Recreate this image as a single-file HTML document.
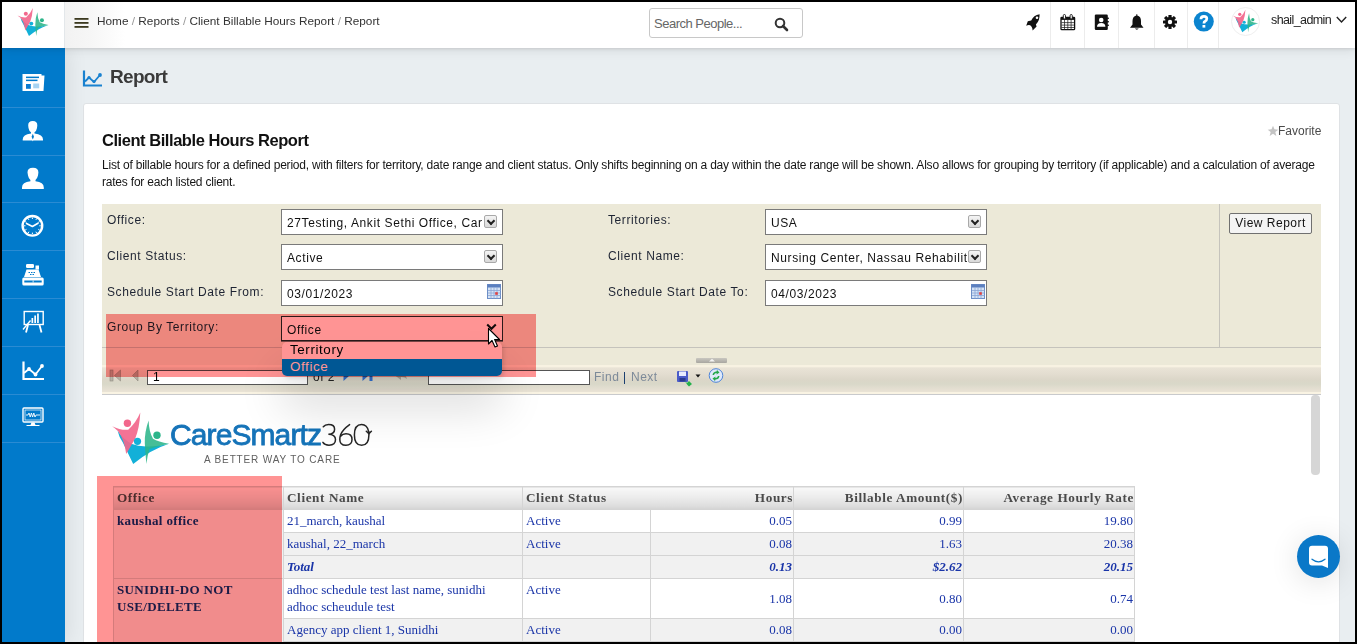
<!DOCTYPE html>
<html><head><meta charset="utf-8">
<style>
*{box-sizing:border-box;margin:0;padding:0}
html,body{width:1357px;height:644px;overflow:hidden;background:#e9eef1}
body{font-family:"Liberation Sans",sans-serif;position:relative}
.a{position:absolute}
#bord{left:0;top:0;width:1357px;height:644px;border:2px solid #000;z-index:100}
/* header */
#hdr{left:2px;top:2px;width:1353px;height:46px;background:#fff;box-shadow:0 1px 3px rgba(0,0,0,.1),0 3px 10px rgba(0,0,0,.08);z-index:5}
#hdrmain{left:64px;top:2px;width:1291px;height:46px;border-left:1px solid #e3e7ea;background:linear-gradient(90deg,#f2f2f2 0,#f6f6f6 25px,#fff 60px);z-index:6}
#side{left:2px;top:48px;width:63px;height:594px;background:#017acb;z-index:4;box-shadow:2px 0 22px rgba(0,0,0,.09)}
.dv{left:0;width:63px;height:1px;background:#2a8bd3}
.crumb{left:97px;top:14px;font-size:11.8px;color:#333;white-space:nowrap;z-index:7}
.crumb span{color:#999}
#search{left:649px;top:8px;width:154px;height:30px;border:1px solid #c8c8c8;border-radius:3px;background:#fff;z-index:7}
#search .ph{position:absolute;left:4px;top:7px;font-size:13px;color:#666;letter-spacing:-.5px}
.hdv{top:2px;width:1px;height:46px;background:#ececec;z-index:7}
.ico{z-index:8}
#uname{left:1271px;top:13px;font-size:12.5px;color:#222;z-index:8;letter-spacing:-0.6px}
/* page */
#ptitle{left:110px;top:66px;font-size:19px;font-weight:bold;color:#3a3a3a;letter-spacing:-0.7px}
#card{left:83px;top:103px;width:1257px;height:560px;background:#fff;border:1px solid #dfe2e5;border-radius:3px}
#ctitle{left:102px;top:131px;font-size:16.5px;font-weight:bold;color:#111;letter-spacing:-0.45px;white-space:nowrap}
#cdesc{left:102px;top:157px;font-size:12px;line-height:17px;color:#151515;white-space:nowrap;letter-spacing:-0.21px}
#fav{left:1267px;top:124px;font-size:12px;color:#4a4a4a;letter-spacing:0px}

#parm{left:102px;top:204px;width:1219px;height:161px;background:#ece9d8}
.pl{font-size:12px;color:#1e2433;white-space:nowrap;letter-spacing:0.6px}
.inp{height:26px;border:1px solid #7a7a7a;background:#fff;font-size:12px;color:#111;white-space:nowrap;overflow:hidden;padding:0 0 0 5px;line-height:27px;letter-spacing:0.6px}
.ddb{position:absolute;width:13px;height:13px;border:1px solid #a9a9a9;border-radius:2px;background:linear-gradient(#f4f4f4,#d9d9d9)}
.ddb:after{content:"";position:absolute;left:3.2px;top:2.2px;width:4px;height:4px;border-right:2px solid #222;border-bottom:2px solid #222;transform:rotate(45deg)}
#tbar{left:102px;top:365px;width:1219px;height:30px;background:linear-gradient(#f8f2e2 0,#f8f2e2 1.5px,#e9e3d6 3px,#e3ddd0 9px,#dbd6c8 15px,#d9d8c9 19px,#e6e0d3 25px,#eae4d6 27px,#f9f3e3 27.5px,#f9f3e3 29px,#c9cacc 29px)}
.tt{font-size:12px;white-space:nowrap}

#rep{left:102px;top:395px;width:1219px;height:250px;background:#fff;overflow:hidden}
table.rt{position:absolute;left:113px;top:486px;border-collapse:collapse;font-family:"Liberation Serif",serif;font-size:13px;color:#1a35a8;table-layout:fixed}
table.rt td,table.rt th{border:1px solid #d4d4d4;vertical-align:top;padding:0 2px 0 3px;overflow:hidden;white-space:nowrap}
table.rt th{height:21px;background:linear-gradient(#f8f8f8,#ececec 45%,#dddddd 85%,#d3d3d3);color:#4a4a4a;font-weight:bold;text-align:left;line-height:17px;font-size:13.2px;letter-spacing:0.6px;padding-top:2px;vertical-align:top}
table.rt td{line-height:17px;padding-top:2px}
table.rt .r{text-align:right;padding-right:1px}
table.rt th.r{padding-right:0}
table.rt .g{background:#f1f1f1}
table.rt .m{vertical-align:middle;padding-top:0}
table.rt th.nb{border-left-style:hidden}
</style></head>
<body>
<div id="bord" class="a"></div>
<div id="hdr" class="a"></div>
<div id="hdrmain" class="a"></div>
<!-- header logo -->
<svg class="a ico" style="left:0;top:0" width="60" height="48" viewBox="0 0 60 48"><g transform="translate(-43.48 -216.45) scale(.544)"><path d="M117.6 430.7 Q119 437 122.7 442.3 L133.2 464 Q150 450 169 443.8 Q155 447 146 446.5 Q138 446 132 444 Q124 440 117.6 430.7Z" fill="#12b0d8"/>
  <path d="M112.1 426.2 Q121 430.5 128.2 429.7 Q136 423 140.3 412.6 Q139.5 428 135.3 438.3 L126.2 453.9 Q124.5 440 118.1 431.2 Q115 428 112.1 426.2Z" fill="#f2678c" opacity=".92"/>
  <path d="M148.6 420.6 Q144.5 432 144.8 443.3 Q145.5 455 146.4 464 Q147.5 455 149.5 449 Q158 446 169 443.8 Q158 442 153 438.8 Q149 432 148.6 420.6Z" fill="#2cb58a" opacity=".88"/>
  <circle cx="127.4" cy="423.2" r="3.7" fill="#f2678c"/>
  <circle cx="137.5" cy="441.3" r="3.6" fill="#12b0d8"/>
  <circle cx="157" cy="435.3" r="3.7" fill="#2cb58a"/></g></svg>
<!-- hamburger -->
<svg class="a ico" style="left:74px;top:17px" width="15" height="12" viewBox="0 0 15 12">
  <rect x="0.5" y="1" width="14" height="1.8" fill="#3b391f"/>
  <rect x="0.5" y="5" width="14" height="1.8" fill="#3b391f"/>
  <rect x="0.5" y="9" width="14" height="1.8" fill="#3b391f"/>
</svg>
<div class="a crumb">Home <span>/</span> Reports <span>/</span> Client Billable Hours Report <span>/</span> Report</div>
<div id="search" class="a"><div class="ph">Search People...</div>
  <svg class="a" style="left:124px;top:8px" width="15" height="15" viewBox="0 0 15 15"><circle cx="6" cy="6" r="4.3" fill="none" stroke="#333" stroke-width="2"/><path d="M9 9 L13 13" stroke="#333" stroke-width="2.6" stroke-linecap="round"/></svg>
</div>

<!-- header dividers -->
<div class="a hdv" style="left:1050px"></div>
<div class="a hdv" style="left:1084px"></div>
<div class="a hdv" style="left:1118px"></div>
<div class="a hdv" style="left:1154px"></div>
<div class="a hdv" style="left:1187px"></div>
<div class="a hdv" style="left:1218px"></div>
<!-- rocket -->
<svg class="a ico" style="left:1025px;top:14px" width="16" height="17" viewBox="0 0 16 17">
  <path d="M14.6 0.3 Q8.5 1.2 6.2 6.6 L2.8 7.3 L1.2 11.8 Q3.2 10.6 5.2 11.2 L6.6 12.8 Q7.6 14.6 7.6 16.6 L11.6 12.6 L10.9 10.4 Q14.8 7 14.6 0.3Z" fill="#111"/>
  <circle cx="12" cy="3.7" r="1.3" fill="#fff"/>
</svg>
<!-- calendar -->
<svg class="a ico" style="left:1060px;top:14px" width="16" height="17" viewBox="0 0 16 17">
  <rect x="1" y="3.3" width="13.6" height="12.4" rx=".8" fill="#fff" stroke="#111" stroke-width="1.3"/>
  <rect x="1" y="3.3" width="13.6" height="2.6" fill="#111"/>
  <path d="M1.5 8.6H14.1M1.5 11.1H14.1M1.5 13.5H14.1M4.5 5.8V15.5M7.8 5.8V15.5M11.1 5.8V15.5" stroke="#222" stroke-width=".75"/>
  <rect x="3.3" y="0.5" width="2.2" height="4.5" rx="1.1" fill="#fff" stroke="#111" stroke-width="0.9"/>
  <rect x="10.1" y="0.5" width="2.2" height="4.5" rx="1.1" fill="#fff" stroke="#111" stroke-width="0.9"/>
</svg>
<!-- contacts -->
<svg class="a ico" style="left:1094px;top:14px" width="16" height="17" viewBox="0 0 16 17">
  <rect x="0.8" y="0.5" width="13" height="15.5" rx="1.2" fill="#111"/>
  <rect x="13" y="3.5" width="2" height="1.6" rx=".8" fill="#111"/><rect x="13" y="7" width="2" height="1.6" rx=".8" fill="#111"/><rect x="13" y="10.5" width="2" height="1.6" rx=".8" fill="#111"/>
  <circle cx="7.2" cy="6" r="2.3" fill="#fff"/>
  <path d="M3 12.8 Q3 9 7.2 9 Q11.4 9 11.4 12.8Z" fill="#fff"/>
</svg>
<!-- bell -->
<svg class="a ico" style="left:1129px;top:14px" width="16" height="17" viewBox="0 0 16 17">
  <path d="M7.3 0.3 L8.3 0.3 L8.3 1.5 Q12 2.4 12 7 L12 10.5 L14.5 13.8 L1 13.8 L3.5 10.5 L3.5 7 Q3.6 2.4 7.3 1.5Z" fill="#111"/>
  <path d="M5.8 14.5 Q7.8 16.8 9.8 14.5Z" fill="#111"/>
</svg>
<!-- gear -->
<svg class="a ico" style="left:1163px;top:15px" width="15" height="15" viewBox="0 0 15 15">
  <g fill="#111" transform="translate(7 7)">
    <circle r="4.9"/>
    <rect x="-1.6" y="-7" width="3.2" height="14" rx=".5"/>
    <rect x="-1.6" y="-7" width="3.2" height="14" rx=".5" transform="rotate(45)"/>
    <rect x="-1.6" y="-7" width="3.2" height="14" rx=".5" transform="rotate(90)"/>
    <rect x="-1.6" y="-7" width="3.2" height="14" rx=".5" transform="rotate(135)"/>
  </g>
  <circle cx="7" cy="7" r="2.2" fill="#fff"/>
</svg>
<!-- help -->
<svg class="a ico" style="left:1193px;top:11px" width="22" height="22" viewBox="0 0 22 22">
  <circle cx="10.8" cy="10.6" r="10" fill="#0b84cf"/>
  <path d="M7.9 8.3 Q7.9 5.4 10.9 5.4 Q13.8 5.4 13.8 7.8 Q13.8 9.3 12.1 10.2 Q10.9 10.8 10.9 12.5" fill="none" stroke="#fff" stroke-width="2.7"/>
  <rect x="9.5" y="14" width="2.8" height="2.6" fill="#fff"/>
</svg>
<!-- avatar -->
<div class="a ico" style="left:1231px;top:7px;width:29px;height:29px;border-radius:50%;border:1px solid #eee;background:#fff"></div>
<svg class="a ico" style="left:1220px;top:0px" width="40" height="46" viewBox="0 0 40 46"><g transform="translate(-36.3 -171.9) scale(.44)"><path d="M117.6 430.7 Q119 437 122.7 442.3 L133.2 464 Q150 450 169 443.8 Q155 447 146 446.5 Q138 446 132 444 Q124 440 117.6 430.7Z" fill="#12b0d8"/>
  <path d="M112.1 426.2 Q121 430.5 128.2 429.7 Q136 423 140.3 412.6 Q139.5 428 135.3 438.3 L126.2 453.9 Q124.5 440 118.1 431.2 Q115 428 112.1 426.2Z" fill="#f2678c" opacity=".92"/>
  <path d="M148.6 420.6 Q144.5 432 144.8 443.3 Q145.5 455 146.4 464 Q147.5 455 149.5 449 Q158 446 169 443.8 Q158 442 153 438.8 Q149 432 148.6 420.6Z" fill="#2cb58a" opacity=".88"/>
  <circle cx="127.4" cy="423.2" r="3.7" fill="#f2678c"/>
  <circle cx="137.5" cy="441.3" r="3.6" fill="#12b0d8"/>
  <circle cx="157" cy="435.3" r="3.7" fill="#2cb58a"/></g></svg>
<div id="uname" class="a">shail_admin</div>
<svg class="a ico" style="left:1336px;top:16px" width="11" height="8" viewBox="0 0 11 8"><path d="M0.8 1 L5.5 6 L10.2 1" fill="none" stroke="#222" stroke-width="1.4"/></svg>
<div id="side" class="a">
  <div class="a dv" style="top:59px"></div>
  <div class="a dv" style="top:107px"></div>
  <div class="a dv" style="top:154px"></div>
  <div class="a dv" style="top:202px"></div>
  <div class="a dv" style="top:250px"></div>
  <div class="a dv" style="top:298px"></div>
  <div class="a dv" style="top:346px"></div>
  <div class="a dv" style="top:394px"></div>
</div>
<!-- sidebar icons (page coords) -->
<svg class="a" style="left:0;top:48px;z-index:6" width="65" height="400" viewBox="0 48 65 400">
  <!-- newspaper -->
  <path d="M22.5 74 H41.5 V75.5 H44.5 L43.5 91 H22.5Z" fill="#fff"/>
  <rect x="26" y="76.6" width="13" height="1.5" fill="#017acb"/>
  <rect x="26" y="79.6" width="11.5" height="1.5" fill="#017acb"/>
  <rect x="26" y="84" width="4.8" height="4.8" fill="#0a7ad0"/>
  <rect x="33.2" y="83.5" width="6" height="4.8" fill="#a6d3f2"/>
  <!-- person with tie -->
  <path d="M28.2 125.5 Q28 121 32.8 121 Q37.5 121 37.3 125.5 L37 128 Q36.5 131 34.5 132.3 L34.5 133.5 Q43 134.5 43 139.5 L43 140.5 L22.7 140.5 L22.7 139.5 Q22.7 134.5 31 133.5 L31 132.3 Q29 131 28.5 128Z" fill="#fff"/>
  <path d="M32.8 133.8 L34 136.8 L32.8 139.6 L31.6 136.8Z" fill="#017acb"/>
  <path d="M32.2 139.8 H33.4 L32.8 141.6Z" fill="#fff"/>
  <!-- person -->
  <path d="M27.5 172.5 Q27.3 167.7 33 167.7 Q38.5 167.7 38.4 172.5 L38 175.5 Q37.3 178.5 35.5 180 L35.5 181.3 Q43.8 182.3 43.8 187.5 L43.8 189 L22 189 L22 187.5 Q22 182.3 30.4 181.3 L30.4 180 Q28.6 178.5 28 175.5Z" fill="#fff"/>
  <!-- clock -->
  <circle cx="32.4" cy="225.8" r="9.8" fill="none" stroke="#fff" stroke-width="2.4"/>
  <path d="M32.4 226.5 L26.5 223.5 M32.4 226.5 L38 223.2" stroke="#fff" stroke-width="1.6" stroke-linecap="round"/>
  <g stroke="#fff" stroke-width="1"><path d="M32.4 217.5V219M32.4 232.6V234.1M24 225.8H25.5M39.3 225.8H40.8M28.2 218.6L28.9 219.9M36.6 218.6L35.9 219.9M28.2 233L28.9 231.7M36.6 233L35.9 231.7M25.2 221.6L26.5 222.3M39.6 221.6L38.3 222.3M25.2 230L26.5 229.3M39.6 230L38.3 229.3"/></g>
  <!-- register -->
  <rect x="26" y="264" width="8" height="4" rx="1.2" fill="#fff"/>
  <rect x="35.5" y="265.5" width="3.5" height="4" fill="#fff"/>
  <path d="M26.5 269.5 H38.5 L41 277 H24Z" fill="#fff"/>
  <g fill="#017acb"><rect x="28.5" y="272" width="1.5" height="1"/><rect x="31" y="272" width="1.5" height="1"/><rect x="33.5" y="272" width="1.5" height="1"/><rect x="30" y="274" width="1.5" height="1"/><rect x="32.5" y="274" width="1.5" height="1"/></g>
  <rect x="22.3" y="277.5" width="21.4" height="8" rx="1.5" fill="#fff"/>
  <rect x="24.3" y="280.5" width="17.4" height="2" fill="#017acb"/>
  <rect x="32.7" y="280.5" width="0.8" height="2" fill="#fff"/>
  <!-- presentation -->
  <rect x="24.2" y="311.5" width="19" height="13" fill="none" stroke="#fff" stroke-width="1.4"/>
  <rect x="31.5" y="318" width="1.7" height="5" fill="#fff"/><rect x="34.3" y="315.5" width="1.7" height="7.5" fill="#fff"/><rect x="37.1" y="313.5" width="1.7" height="9.5" fill="#fff"/>
  <path d="M23 329.5 L30.5 320.5" stroke="#fff" stroke-width="1.3"/>
  <path d="M28 325 L26 332.5 M39.5 325 L41.5 332.5" stroke="#fff" stroke-width="1.8"/>
  <!-- chart -->
  <path d="M23.5 361.5 V379 H44" fill="none" stroke="#fff" stroke-width="2.2"/>
  <path d="M24 373 L29 369 L35.5 374.5 L42 366" fill="none" stroke="#fff" stroke-width="1.8"/>
  <circle cx="29" cy="369" r="1.9" fill="#fff"/><circle cx="35.5" cy="374.5" r="1.9" fill="#fff"/><circle cx="42" cy="366" r="1.9" fill="#fff"/>
  <!-- monitor -->
  <rect x="23" y="408" width="20" height="14" rx="1" fill="none" stroke="#fff" stroke-width="1.4"/>
  <rect x="25" y="410" width="16" height="10" fill="none" stroke="#fff" stroke-width=".7"/>
  <path d="M26 415 H28 L29 413 L30.2 417 L31.4 413 L32.6 417 L33.8 413 L35 417 L36 415 H40" fill="none" stroke="#fff" stroke-width=".9"/>
  <path d="M31.5 422.5 L30.5 425 H26.5 V426 H39.5 V425 H35.5 L34.5 422.5Z" fill="#fff"/>
</svg>
<!-- page title -->
<svg class="a" style="left:82px;top:69px" width="22" height="19" viewBox="0 0 22 19">
  <path d="M2 1.5 V16.5 H20" fill="none" stroke="#1a82d0" stroke-width="2.2"/>
  <path d="M3 12.5 L7 8.5 L12 13 L18 6" fill="none" stroke="#1a82d0" stroke-width="1.8"/>
  <circle cx="7" cy="8.5" r="1.6" fill="#1a82d0"/><circle cx="12" cy="12.5" r="1.6" fill="#1a82d0"/><circle cx="18" cy="6" r="1.9" fill="#1a82d0"/>
</svg>
<div id="ptitle" class="a">Report</div>
<div id="card" class="a"></div>
<div id="ctitle" class="a">Client Billable Hours Report</div>
<div id="cdesc" class="a">List of billable hours for a defined period, with filters for territory, date range and client status. Only shifts beginning on a day within the date range will be shown. Also allows for grouping by territory (if applicable) and a calculation of average<br>rates for each listed client.</div>

<div id="parm" class="a"></div>
<div class="a" style="left:102px;top:347px;width:1219px;height:1px;background:#c5c3bc"></div>
<div class="a" style="left:1219px;top:204px;width:1px;height:143px;background:#c5c3bc"></div>
<div class="a pl" style="left:107px;top:213px">Office:</div>
<div class="a pl" style="left:107px;top:249px">Client Status:</div>
<div class="a pl" style="left:107px;top:285px">Schedule Start Date From:</div>
<div class="a pl" style="left:107px;top:320px">Group By Territory:</div>
<div class="a pl" style="left:608px;top:213px">Territories:</div>
<div class="a pl" style="left:608px;top:249px">Client Name:</div>
<div class="a pl" style="left:608px;top:285px">Schedule Start Date To:</div>
<div class="a inp" style="left:281px;top:209px;width:222px">27Testing, Ankit Sethi Office, Car<span class="ddb" style="left:202px;top:5px"></span></div>
<div class="a inp" style="left:281px;top:244px;width:222px">Active<span class="ddb" style="left:202px;top:5px"></span></div>
<div class="a inp" style="left:281px;top:280px;width:222px">03/01/2023</div>
<div class="a inp" style="left:281px;top:316px;width:222px">Office</div>
<div class="a inp" style="left:765px;top:209px;width:222px">USA<span class="ddb" style="left:202px;top:5px"></span></div>
<div class="a inp" style="left:765px;top:244px;width:222px">Nursing Center, Nassau Rehabilita<span class="ddb" style="left:202px;top:5px"></span></div>
<div class="a inp" style="left:765px;top:280px;width:222px">04/03/2023</div>
<div class="a" style="left:1229px;top:213px;width:83px;height:21px;border:1px solid #707070;border-radius:2px;background:#f4f4f4;font-size:12px;color:#111;text-align:center;line-height:19px;letter-spacing:0.5px">View Report</div>
<svg class="a" style="left:487px;top:284px" width="15" height="15" viewBox="0 0 15 15"><rect x="0.5" y="0.5" width="13" height="14" fill="#d5e3f5" stroke="#6d8fc7"/><rect x="0.5" y="0.5" width="13" height="3" fill="#5b7fbf"/><path d="M1 6.5H13.5M1 9H13.5M1 11.5H13.5M4 3.5V14.5M7 3.5V14.5M10 3.5V14.5" stroke="#8aa6d6" stroke-width=".8"/><rect x="8.2" y="8.2" width="2.6" height="2.6" fill="#e04040"/></svg><svg class="a" style="left:971px;top:284px" width="15" height="15" viewBox="0 0 15 15"><rect x="0.5" y="0.5" width="13" height="14" fill="#d5e3f5" stroke="#6d8fc7"/><rect x="0.5" y="0.5" width="13" height="3" fill="#5b7fbf"/><path d="M1 6.5H13.5M1 9H13.5M1 11.5H13.5M4 3.5V14.5M7 3.5V14.5M10 3.5V14.5" stroke="#8aa6d6" stroke-width=".8"/><rect x="8.2" y="8.2" width="2.6" height="2.6" fill="#e04040"/></svg><div id="tbar" class="a"></div>

<!-- toolbar contents -->
<svg class="a" style="left:108px;top:369px" width="32" height="13" viewBox="0 0 32 13">
  <rect x="2" y="1" width="3" height="11" fill="#b8b4a8" stroke="#8e8a80" stroke-width=".6"/>
  <path d="M12.5 1 L6.5 6.5 L12.5 12Z" fill="#b4b0a4" stroke="#8e8a80" stroke-width=".6"/>
  <path d="M30 1 L24.5 6.5 L30 12Z" fill="#b4b0a4" stroke="#8e8a80" stroke-width=".6"/>
</svg>
<div class="a" style="left:147px;top:370px;width:161px;height:15px;border:1px solid #555;background:#fff;font-size:12px;line-height:13px;padding-left:5px;color:#000">1</div>
<div class="a tt" style="left:313px;top:370px;color:#222;letter-spacing:.5px">of 2</div>
<svg class="a" style="left:340px;top:369px" width="36" height="13" viewBox="0 0 36 13">
  <path d="M3.5 1 L9.5 6.5 L3.5 12Z" fill="#2e6fd0"/>
  <path d="M22.5 1 L28.5 6.5 L22.5 12Z" fill="#2e6fd0"/><rect x="29.5" y="1" width="3" height="11" fill="#2e6fd0"/>
</svg>
<svg class="a" style="left:393px;top:369px" width="16" height="13" viewBox="0 0 16 13"><path d="M2 6.5 L8 2 V5 Q13 5 14 10 Q12 8 8 8 V11Z" fill="#aaa69a"/></svg>
<div class="a" style="left:428px;top:370px;width:162px;height:15px;border:1px solid #555;background:#fff"></div>
<div class="a tt" style="left:594px;top:370px;color:#7d8a99;letter-spacing:.5px">Find</div>
<div class="a" style="left:624px;top:372px;width:1px;height:12px;background:#1b3f70"></div>
<div class="a tt" style="left:631px;top:370px;color:#7d8a99;letter-spacing:.5px">Next</div>
<svg class="a" style="left:676px;top:370px" width="18" height="17" viewBox="0 0 18 17">
  <rect x="1" y="1" width="11" height="11" rx="1" fill="#4a5bc8"/>
  <rect x="3" y="1.5" width="7" height="4.5" fill="#e8ecff"/>
  <rect x="3.5" y="8" width="6" height="3.5" fill="#2a3a90"/>
  <path d="M8 10 L11 13 L13 11 L16 14 L13 16.5 L11.5 15 Z" fill="#22b04a"/>
</svg>
<svg class="a" style="left:694px;top:373px" width="8" height="6" viewBox="0 0 8 6"><path d="M1.5 1.5 H6.5 L4 4.5Z" fill="#111"/></svg>
<svg class="a" style="left:708px;top:368px" width="16" height="16" viewBox="0 0 16 16">
  <circle cx="8" cy="7.5" r="6.8" fill="#dfe9fb" stroke="#4d84d8" stroke-width="1"/>
  <path d="M4.5 7 Q5 3.5 8.5 3.5 L9 2 L11.5 4.5 L8.5 6.5 L8.7 5 Q6.5 5 6 7Z" fill="#23a84a"/>
  <path d="M11.5 8 Q11 11.5 7.5 11.5 L7 13 L4.5 10.5 L7.5 8.5 L7.3 10 Q9.5 10 10 8Z" fill="#23a84a"/>
</svg>
<div class="a" style="left:696px;top:358px;width:31px;height:5px;background:linear-gradient(#c9c7c0,#a8a6a0);border-radius:1px"></div>
<svg class="a" style="left:708px;top:358px" width="8" height="4" viewBox="0 0 8 4"><path d="M1 3.5 L4 0.8 L7 3.5Z" fill="#f4f4f4"/></svg>


<div id="rep" class="a"></div>
<!-- report logo -->
<svg class="a" style="left:108px;top:408px" width="70" height="60" viewBox="108 408 70 60">
  <g style="mix-blend-mode:multiply">
  <path d="M117.6 430.7 Q119 437 122.7 442.3 L133.2 464 Q150 450 169 443.8 Q155 447 146 446.5 Q138 446 132 444 Q124 440 117.6 430.7Z" fill="#12b0d8"/>
  </g>
  <path d="M112.1 426.2 Q121 430.5 128.2 429.7 Q136 423 140.3 412.6 Q139.5 428 135.3 438.3 L126.2 453.9 Q124.5 440 118.1 431.2 Q115 428 112.1 426.2Z" fill="#f2678c" opacity=".92"/>
  <path d="M148.6 420.6 Q144.5 432 144.8 443.3 Q145.5 455 146.4 464 Q147.5 455 149.5 449 Q158 446 169 443.8 Q158 442 153 438.8 Q149 432 148.6 420.6Z" fill="#2cb58a" opacity=".88"/>
  <circle cx="127.4" cy="423.2" r="3.7" fill="#f2678c"/>
  <circle cx="137.5" cy="441.3" r="3.6" fill="#12b0d8"/>
  <circle cx="157" cy="435.3" r="3.7" fill="#2cb58a"/>
</svg>
<div class="a" style="left:170px;top:418px;font-size:30px;color:#1573b8;letter-spacing:-0.9px;white-space:nowrap;-webkit-text-stroke:0.8px #1573b8">CareSmartz</div>
<svg class="a" style="left:318px;top:420px" width="56" height="30" viewBox="318 420 56 30">
  <g fill="none" stroke="#262626" stroke-width="1.5" stroke-linecap="round">
    <path d="M323.3 426.8 Q325 424.5 328.6 424.5 Q334.6 424.5 334.6 429.2 Q334.6 434 328.4 434.2 Q335.5 434.4 335.5 439.6 Q335.5 445.2 329 445.2 Q324.6 445.2 322.9 442.4"/>
    <path d="M349.6 424.6 Q342.6 429.6 340.6 434.8 Q339.8 437 339.8 439.4 Q339.8 445.2 345.9 445.2 Q352 445.2 352 439.5 Q352 433.8 346 433.8 Q342.5 433.8 340.6 436.2"/>
    <path d="M368.6 431.5 Q367.2 424.5 361.6 424.5 Q354.4 424.5 354.4 434.9 Q354.4 445.2 361.6 445.2 Q368.9 445.2 368.9 434.9 L368.9 431.6"/>
    <path d="M366.3 431.2 L368.9 433.6 L371.4 431.2"/>
  </g>
</svg>
<div class="a" style="left:204px;top:453.5px;font-size:10px;color:#606060;letter-spacing:0.85px;white-space:nowrap">A BETTER WAY TO CARE</div>
<table class="rt">
<colgroup><col style="width:170px"><col style="width:239px"><col style="width:128px"><col style="width:143px"><col style="width:170px"><col style="width:171px"></colgroup>
<tr style="height:23px"><th>Office</th><th>Client Name</th><th>Client Status</th><th class="r nb">Hours</th><th class="r">Billable Amount($)</th><th class="r">Average Hourly Rate</th></tr>
<tr style="height:23px"><td rowspan="3" class="g" style="font-weight:bold;color:#1c2e78;letter-spacing:.35px">kaushal office</td><td>21_march, kaushal</td><td>Active</td><td class="r">0.05</td><td class="r">0.99</td><td class="r">19.80</td></tr>
<tr style="height:23px"><td class="g">kaushal, 22_march</td><td class="g">Active</td><td class="r g">0.08</td><td class="r g">1.63</td><td class="r g">20.38</td></tr>
<tr style="height:23px"><td class="g" style="font-weight:bold;font-style:italic">Total</td><td class="g"></td><td class="r g" style="font-weight:bold;font-style:italic">0.13</td><td class="r g" style="font-weight:bold;font-style:italic">$2.62</td><td class="r g" style="font-weight:bold;font-style:italic">20.15</td></tr>
<tr style="height:40px"><td rowspan="3" class="g" style="font-weight:bold;color:#1c2e78;white-space:normal;letter-spacing:.35px">SUNIDHI-DO NOT<br>USE/DELETE</td><td style="white-space:normal">adhoc schedule test last name, sunidhi<br>adhoc scheudule test</td><td>Active</td><td class="r m">1.08</td><td class="r m">0.80</td><td class="r m">0.74</td></tr>
<tr style="height:23px"><td class="g">Agency app client 1, Sunidhi</td><td class="g">Active</td><td class="r g">0.08</td><td class="r g">0.00</td><td class="r g">0.00</td></tr>
<tr><td class="g">x</td><td class="g">x</td><td class="r g">x</td><td class="r g">x</td><td class="r g">x</td></tr>
</table>
<div class="a" style="left:97px;top:476px;width:185px;height:170px;background:#ff9494;mix-blend-mode:multiply;z-index:25"></div>
<div class="a" style="left:1311px;top:395px;width:9px;height:80px;border-radius:4px;background:#d6d6d6"></div>

<div class="a" style="left:1297px;top:535px;width:43px;height:43px;border-radius:50%;background:#0a78c8;box-shadow:0 4px 30px rgba(0,0,0,.12);z-index:40"></div>
<svg class="a" style="left:1297px;top:535px;z-index:41" width="43" height="43" viewBox="1297 535 43 43">
  <path d="M1312 545.8 H1325 Q1328 545.8 1328 548.8 V568 L1322 565.5 H1312 Q1309 565.5 1309 562.5 V548.8 Q1309 545.8 1312 545.8Z" fill="#fff"/>
  <path d="M1312 559.2 Q1318.5 564.5 1325 559.2" fill="none" stroke="#0a78c8" stroke-width="1.3" stroke-linecap="round"/>
</svg>
<!-- red overlay + popup -->
<div class="a" style="left:281px;top:316px;width:222px;height:25px;border:1px solid #2a2a2a;z-index:21"></div>
<svg class="a" style="left:486px;top:323px;z-index:22" width="11" height="8" viewBox="0 0 11 8"><path d="M1.2 1.5 L5.5 5.8 L9.8 1.5" fill="none" stroke="#111" stroke-width="2"/></svg>
<div class="a" style="left:282px;top:342px;width:220px;height:34px;background:#fff;border-radius:5px;overflow:hidden;z-index:22;box-shadow:2px 2px 4px rgba(0,0,0,.12),0 30px 45px rgba(0,0,0,.16)">
  <div style="position:absolute;left:8px;top:0px;font-size:13.4px;color:#000;letter-spacing:.6px">Territory</div>
  <div style="position:absolute;left:0;top:17px;width:220px;height:17px;background:#0096ff"></div>
  <div style="position:absolute;left:8px;top:17px;font-size:13.4px;color:#fff;letter-spacing:.6px">Office</div>
</div>
<div class="a" style="left:106px;top:314px;width:430px;height:63px;background:#ff9494;mix-blend-mode:multiply;z-index:25"></div>
<svg class="a" style="left:487px;top:327px;z-index:30" width="16" height="22" viewBox="0 0 16 22"><path d="M1.5 1.5 V17 L5 13.5 L8 20 L10.5 19 L7.6 12.5 H12.5Z" fill="#fff" stroke="#000" stroke-width="1.1" stroke-linejoin="round"/></svg>
<div id="fav" class="a"><svg style="position:absolute;left:0;top:1px" width="12" height="12" viewBox="0 0 14 13"><path d="M7 0.5 L8.7 4.6 L13.2 4.9 L9.7 7.8 L10.9 12.2 L7 9.7 L3.1 12.2 L4.3 7.8 L0.8 4.9 L5.3 4.6Z" fill="#c4c4c4"/></svg><span style="position:absolute;left:11px;top:0;white-space:nowrap">Favorite</span></div>
</body></html>
